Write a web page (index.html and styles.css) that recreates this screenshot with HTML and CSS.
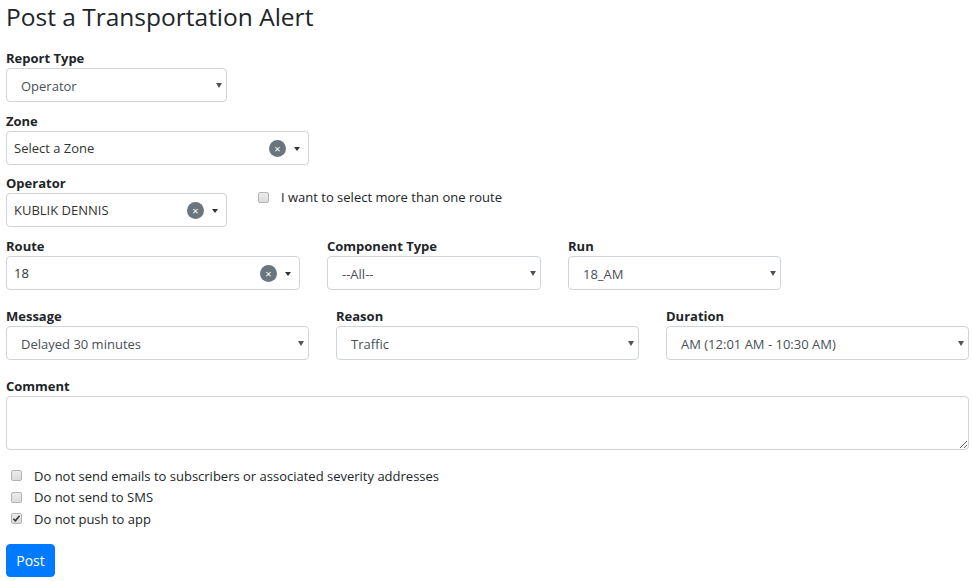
FILE: index.html
```html
<!DOCTYPE html>
<html lang="en">
<head>
<meta charset="utf-8">
<title>Post a Transportation Alert</title>
<link rel="stylesheet" href="styles.css">
</head>
<body>
<div class="page">
  <h1 class="title">Post a Transportation Alert</h1>

  <div class="row row-gap9">
    <div class="field w221">
      <label class="lbl">Report Type</label>
      <div class="sel"><span class="sel-text">Operator</span><span class="caret"></span></div>
    </div>
  </div>

  <div class="row row-gap8">
    <div class="field w303">
      <label class="lbl">Zone</label>
      <div class="s2"><span class="s2-text">Select a Zone</span><span class="clear">×</span><span class="caret caret-s2"></span></div>
    </div>
  </div>

  <div class="row row-gap9">
    <div class="field w221">
      <label class="lbl">Operator</label>
      <div class="s2"><span class="s2-text">KUBLIK DENNIS</span><span class="clear">×</span><span class="caret caret-s2"></span></div>
    </div>
    <div class="inline-check">
      <span class="cb"></span>
      <span class="cb-label">I want to select more than one route</span>
    </div>
  </div>

  <div class="row row-gap16 cols-route">
    <div class="field">
      <label class="lbl">Route</label>
      <div class="s2"><span class="s2-text">18</span><span class="clear">×</span><span class="caret caret-s2"></span></div>
    </div>
    <div class="field">
      <label class="lbl">Component Type</label>
      <div class="sel"><span class="sel-text">--All--</span><span class="caret"></span></div>
    </div>
    <div class="field">
      <label class="lbl">Run</label>
      <div class="sel"><span class="sel-text">18_AM</span><span class="caret"></span></div>
    </div>
  </div>

  <div class="row row-gap16 cols-three">
    <div class="field">
      <label class="lbl">Message</label>
      <div class="sel"><span class="sel-text">Delayed 30 minutes</span><span class="caret"></span></div>
    </div>
    <div class="field">
      <label class="lbl">Reason</label>
      <div class="sel"><span class="sel-text">Traffic</span><span class="caret"></span></div>
    </div>
    <div class="field">
      <label class="lbl">Duration</label>
      <div class="sel"><span class="sel-text">AM (12:01 AM - 10:30 AM)</span><span class="caret"></span></div>
    </div>
  </div>

  <div class="field comment">
    <label class="lbl">Comment</label>
    <textarea class="ta"></textarea>
  </div>

  <div class="checks">
    <div class="check"><span class="cb"></span><span class="cb-label">Do not send emails to subscribers or associated severity addresses</span></div>
    <div class="check"><span class="cb"></span><span class="cb-label">Do not send to SMS</span></div>
    <div class="check"><span class="cb checked"><svg viewBox="0 0 10 10" width="9" height="9"><path d="M1.5 5.2 L3.8 7.6 L8.4 2" fill="none" stroke="#333" stroke-width="1.7"/></svg></span><span class="cb-label">Do not push to app</span></div>
  </div>

  <button class="btn">Post</button>
</div>
</body>
</html>
```

FILE: styles.css
```css
* { box-sizing: border-box; }
html, body { margin: 0; padding: 0; background: #fff; }
body {
  font-family: "Open Sans", "Noto Sans", "Liberation Sans", sans-serif;
  font-size: 13px;
  color: #212529;
}
.page { padding: 0 4px 0 6px; }
.title {
  margin: 0 0 14px 0;
  font-size: 24.5px;
  font-weight: 400;
  line-height: 34px;
  color: #212529;
}
.row { display: flex; align-items: flex-start; }
.row-gap8 { margin-bottom: 8px; }
.row-gap9 { margin-bottom: 9px; }
.row-gap16 { margin-bottom: 16px; }
.field { display: flex; flex-direction: column; }
.w221 { width: 221px; }
.w303 { width: 303px; }
.lbl {
  display: block;
  font-weight: 700;
  line-height: 20px;
  color: #212529;
}
.sel, .s2 {
  height: 34px;
  border: 1px solid #ced4da;
  border-radius: 4px;
  background: #fff;
  display: flex;
  align-items: center;
}
.sel { padding: 1px 4px 0 14px; color: #495057; }
.s2 { padding: 0 8px 0 7px; color: #333; }
.sel-text, .s2-text { flex: 1; white-space: nowrap; overflow: hidden; }
.caret {
  width: 0; height: 0;
  border-left: 3px solid transparent;
  border-right: 3px solid transparent;
  border-top: 5px solid #555;
  margin-top: -1px;
}
.caret-s2 { border-top-color: #333; border-left-width: 3.5px; border-right-width: 3.5px; border-top-width: 4px; margin-top: 1px; }
.clear {
  width: 17px; height: 17px;
  border-radius: 50%;
  background: #6c757d;
  color: #fff;
  font-size: 11px;
  line-height: 17px;
  text-align: center;
  margin-right: 8px;
}
.inline-check {
  display: flex;
  align-items: center;
  margin: 15px 0 0 31px;
}
.cb {
  width: 11px; height: 11px;
  border: 1px solid #b4b4b4;
  border-radius: 2px;
  background: linear-gradient(#ececec, #dcdcdc);
  display: inline-flex;
  align-items: center;
  justify-content: center;
  flex-shrink: 0;
}
.cb-label { margin-left: 12px; color: #212529; }
.cols-route { display: grid; grid-template-columns: 294px 214px 213px; column-gap: 27px; }
.cols-three { display: grid; grid-template-columns: 1fr 1fr 1fr; column-gap: 27px; }
.comment { margin-bottom: 15px; }
.ta {
  display: block;
  width: 100%;
  height: 54px;
  border: 1px solid #ced4da;
  border-radius: 4px;
  resize: vertical;
  font-family: inherit;
  font-size: 13px;
}
.checks { margin-bottom: 14px; }
.check {
  display: flex;
  align-items: center;
  height: 21.5px;
  padding-left: 5px;
}
.check .cb-label { margin-left: 12px; }
.btn {
  display: block;
  width: 49px; height: 33px;
  border: 1px solid #007bff;
  border-radius: 4px;
  background: #007bff;
  color: #fff;
  font-family: inherit;
  font-size: 14px;
  padding: 0;
  cursor: pointer;
}
```
